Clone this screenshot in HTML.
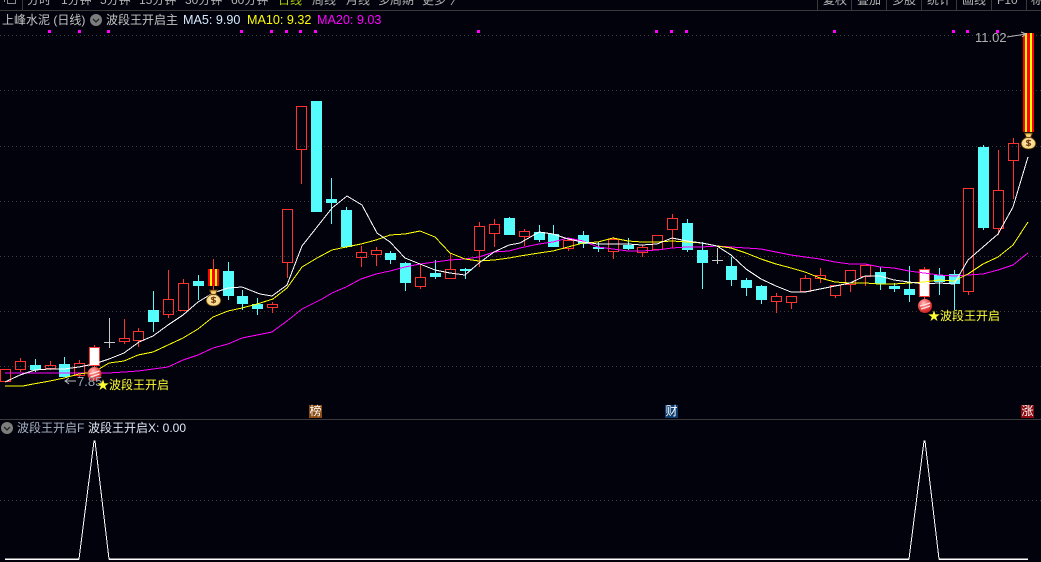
<!DOCTYPE html>
<html><head><meta charset="utf-8"><style>
html,body{margin:0;padding:0;background:#02020d;width:1041px;height:562px;overflow:hidden}
#r{position:relative;width:1041px;height:562px;overflow:hidden;background:#02020d;font-family:"Liberation Sans","Noto Sans CJK SC",sans-serif;font-size:12px;line-height:14px;color:#c8c8c8}
#r span,#r b{position:absolute;white-space:nowrap;font-weight:normal}
.t{top:-7px;color:#b4b4b4;font-size:12px}
svg{position:absolute;left:0;top:0}
.tag{width:13px;height:13px;text-align:center;color:#fff;font-size:12px;line-height:13px;top:405px}
.ma{top:13px;font-size:12.6px}
</style></head><body><div id="r">
<svg width="1041" height="562" viewBox="0 0 1041 562">
<g fill="none" shape-rendering="crispEdges">
<path stroke="#3a3a3a" d="M0 10.5H1041M0 419.5H1041M22.5 0V10M817.5 0V10M851.5 0V10M886.5 0V10M921.5 0V10M956.5 0V10M991.5 0V10M1026.5 0V10"/>
<path stroke="#3c3c3c" stroke-dasharray="1 3" d="M0 35.5H1041M0 90.5H1041M0 146.5H1041M0 201.5H1041M0 256.5H1041M0 311.5H1041M0 366.5H1041M0 500.5H1041"/>
<path stroke="#8a8a8a" d="M7.500 0V3.500H15.500V0M4.500 0V2"/>
<path fill="#ff00ff" stroke="none" d="M48 30h3v3h-3zM78 30h3v3h-3zM107 30h3v3h-3zM240 30h3v3h-3zM270 30h3v3h-3zM285 30h3v3h-3zM299 30h3v3h-3zM314 30h3v3h-3zM477 30h3v3h-3zM655 30h3v3h-3zM670 30h3v3h-3zM685 30h3v3h-3zM833 30h3v3h-3zM952 30h3v3h-3zM966 30h3v3h-3zM996 30h3v3h-3z"/>
<!-- cyan candles -->
<path fill="#54fcfc" stroke="none" d="M30 365h11v5h-11zM35 359h1v13h-1zM59 364h11v13h-11zM64 357h1v20h-1zM148 310h11v12h-11zM153 291h1v41h-1zM193 281h11v5h-11zM198 275h1v25h-1zM223 271h11v25h-11zM228 262h1v38h-1zM237 296h11v8h-11zM242 290h1v20h-1zM252 304h11v5h-11zM257 298h1v17h-1zM311 101h11v111h-11zM326 199h11v4h-11zM331 178h1v46h-1zM341 210h11v37h-11zM346 207h1v41h-1zM385 253h11v7h-11zM390 251h1v13h-1zM400 263h11v20h-11zM405 262h1v29h-1zM430 273h11v4h-11zM435 260h1v19h-1zM460 269h11v2h-11zM465 268h1v11h-1zM504 218h11v17h-11zM509 217h1v18h-1zM534 232h11v8h-11zM539 225h1v17h-1zM548 234h11v13h-11zM553 225h1v22h-1zM578 235h11v9h-11zM583 231h1v17h-1zM593 247h11v2h-11zM598 242h1v10h-1zM623 245h11v4h-11zM628 238h1v12h-1zM682 223h11v27h-11zM687 219h1v33h-1zM697 250h11v13h-11zM702 242h1v47h-1zM726 266h11v14h-11zM731 257h1v29h-1zM741 280h11v8h-11zM746 278h1v18h-1zM756 286h11v14h-11zM761 285h1v19h-1zM875 272h11v12h-11zM880 267h1v23h-1zM889 286h11v3h-11zM894 283h1v9h-1zM904 289h11v6h-11zM909 266h1v36h-1zM934 275h11v7h-11zM939 268h1v27h-1zM949 274h11v10h-11zM954 270h1v40h-1zM978 147h11v81h-11zM983 145h1v85h-1z"/>
<!-- white bodies -->
<path fill="#fff" stroke="none" d="M90 348h9v17h-9zM920 270h9v26h-9z"/>
<!-- red candles -->
<path stroke="#ff3232" d="M.5 369.5h10v12h-10zM15.5 361.5h10v8h-10zM20.5 358V361M20.5 370V372M45.5 365.5h10v3h-10zM50.5 361V365M50.5 369V370M74.5 363.5h10v12h-10zM79.5 360V363M79.5 376V378M89.5 347.5h10v18h-10zM94.5 345V347M94.5 366V368M119.5 338.5h10v3h-10zM124.5 319V338M124.5 342V344M133.5 331.5h10v9h-10zM138.5 328V331M138.5 341V347M163.5 299.5h10v15h-10zM168.5 270V299M168.5 315V318M178.5 283.5h10v27h-10zM183.5 279V283M267.5 304.5h10v3h-10zM272.5 302V304M272.5 308V313M282.5 209.5h10v53h-10zM287.5 263V278M296.5 106.5h10v43h-10zM301.5 150V184M356.5 252.5h10v5h-10zM361.5 246V252M361.5 258V267M371.5 250.5h10v4h-10zM376.5 247V250M376.5 255V266M415.5 277.5h10v9h-10zM420.5 265V277M420.5 287V289M445.5 269.5h10v9h-10zM450.5 253V269M474.5 226.5h10v24h-10zM479.5 222V226M479.5 251V267M489.5 224.5h10v9h-10zM494.5 219V224M494.5 234V247M519.5 231.5h10v5h-10zM524.5 229V231M524.5 237V246M563.5 240.5h10v8h-10zM568.5 238V240M568.5 249V251M608.5 239.5h10v12h-10zM613.5 237V239M613.5 252V259M637.5 247.5h10v5h-10zM642.5 245V247M642.5 253V257M652.5 235.5h10v14h-10zM667.5 218.5h10v11h-10zM672.5 214V218M672.5 230V248M771.5 296.5h10v5h-10zM776.5 293V296M776.5 302V313M786.5 296.5h10v6h-10zM791.5 303V309M800.5 278.5h10v13h-10zM805.5 275V278M815.5 275.5h10v3h-10zM820.5 268V275M820.5 279V283M830.5 285.5h10v10h-10zM835.5 296V298M845.5 270.5h10v14h-10zM850.5 285V292M860.5 265.5h10v11h-10zM865.5 277V286M919.5 269.5h10v27h-10zM924.5 267V269M924.5 297V299M963.5 188.5h10v103h-10zM968.5 292V295M993.5 190.5h10v38h-10zM998.5 150V190M998.5 229V235M1008.5 143.5h10v17h-10zM1013.5 138V143M1013.5 161V199"/>
<path stroke="#c8c8c8" d="M104 342.5h11M109.5 318V348M712 260.5h11M717.5 248V264"/>
<!-- special bars -->
<path stroke="#ff3232" d="M213.5 259V269M213.5 286V292"/>
<path fill="#ff0000" stroke="none" d="M208 269h11v17h-11zM1023 33h11v99h-11z"/>
<path fill="#ffff00" stroke="none" d="M210 269h2v17h-2zM215 269h2v17h-2zM1025 33h2v99h-2zM1030 33h2v99h-2z"/>
<!-- lines -->
<polyline stroke="#ff00ff" points="5,373 94,373 109,373 124,372 138,371 153,369 168,367 183,360 198,355 213,348 228,344 242,338 257,335 272,332 287,321 302,309 322,299 332,293 346,287 361,279 376,274 390,271 405,267 420,264 435,262 450,260 465,259 479,257 494,252 509,251 520,248 539,244 553,242 568,238 583,241 598,247 613,249 628,251 642,251 657,250 672,248 687,247 702,247 717,246 731,247 746,248 761,249 776,252 791,255 805,257 820,259 835,262 850,264 865,264 880,267 894,268 909,271 924,273 939,275 954,276 968,275 983,274 998,270 1013,265 1028,253"/>
<polyline stroke="#ffff00" points="5,386 23,386 33,384 50,381 64,378 79,374 94,372 109,363 124,361 138,355 153,352 168,345 183,338 198,329 213,317 228,311 242,308 257,304 273,299 287,288 302,267 317,258 332,250 346,247 361,244 376,240 390,235 405,234 420,231 435,237 450,253 465,259 479,261 494,260 509,258 520,256 539,253 553,251 568,247 583,243 598,242 613,238 628,241 642,242 657,242 672,241 687,242 702,243 717,246 731,248 746,253 761,259 776,264 791,268 805,272 820,278 835,282 850,283 865,283 880,284 894,284 909,283 924,282 939,280 954,281 968,274 983,264 998,257 1013,245 1028,222"/>
<polyline stroke="#ffffff" points="5,382 20,375 35,370 50,369 64,369 79,367 94,364 109,359 124,353 139,342 153,336 168,325 183,315 198,302 213,293 228,288 242,287 260,294 272,296 287,285 302,246 317,227 332,208 347,196 362,205 377,233 390,242 405,258 420,264 435,270 450,273 465,275 479,263 494,252 509,245 520,243 539,232 553,234 568,239 583,242 598,244 613,244 628,244 642,245 657,244 672,238 687,241 702,243 717,246 731,255 746,269 761,279 776,286 791,292 805,292 820,289 835,286 850,283 865,276 880,276 894,280 909,282 924,284 939,283 954,284 968,260 983,247 998,234 1013,207 1028,157"/>
<polyline stroke="#ffffff" stroke-width="1" points="5,559 79,559 94,441 95,441 109,559 909,559 924,441 925,441 939,559 1028,559"/>
<path stroke="#ffffff" d="M5 559.5H79M109 559.5H909M939 559.5H1028"/>
</g>
<!-- arrows -->
<g fill="none" stroke="#b8b8b8">
<path d="M1007 37L1026 34M1021 32L1026 34L1022 37"/>
<path d="M65 381H76M69 378L65 381L69 384"/>
</g>
<!-- circle icons -->
<g>
<circle cx="96" cy="20" r="6" fill="#7d7d7d"/><path d="M93 19l3 3 3-3" fill="none" stroke="#222" stroke-width="1.3"/>
<circle cx="7" cy="428" r="6" fill="#7d7d7d"/><path d="M4 427l3 3 3-3" fill="none" stroke="#222" stroke-width="1.3"/>
</g>
<!-- balls -->
<defs>
<radialGradient id="bl" cx=".4" cy=".3" r=".75"><stop offset="0" stop-color="#ffc0c0"/><stop offset=".55" stop-color="#f04848"/><stop offset="1" stop-color="#c01c1c"/></radialGradient>
<radialGradient id="bg" cx=".5" cy=".6" r=".65"><stop offset="0" stop-color="#fff6d0"/><stop offset=".75" stop-color="#f4d070"/><stop offset="1" stop-color="#a87010"/></radialGradient>
<g id="ball"><circle r="7" fill="url(#bl)"/><path d="M-5 0Q0 -1 5 -3M-4 3Q0 2 5 0" fill="none" stroke="#ffe4e4" stroke-width="1.300"/></g>
<g id="bag"><path d="M-4 -8L4 -8L2 -3.500C6 -2 8 1 7 4C6 7 3 8 0 8C-3 8 -6 7 -7 4C-8 1 -6 -2 -2 -3.500Z" fill="url(#bg)" stroke="#5e3a08" stroke-width=".8"/><path d="M-3 -3.500H3" stroke="#7a4a08" stroke-width="1.200"/><path d="M2.500 0Q0 -1.200 -2 0Q-2.300 1.500 0 2Q2.500 2.500 2 3.800Q0 5 -2.500 3.800M0 -1.500V5.500" fill="none" stroke="#7a3c08" stroke-width="1.200"/></g>
</defs>
<use href="#ball" x="94.500" y="374"/>
<use href="#ball" x="925" y="306"/>
<use href="#bag" x="213.500" y="298"/>
<use href="#bag" x="1028.500" y="141"/>
</svg>

<span class="t" style="left:27px">分时</span>
<span class="t" style="left:61px">1分钟</span>
<span class="t" style="left:100px">5分钟</span>
<span class="t" style="left:139px">15分钟</span>
<span class="t" style="left:185px">30分钟</span>
<span class="t" style="left:231px">60分钟</span>
<span class="t" style="left:278px;color:#b4d000">日线</span>
<span class="t" style="left:312px">周线</span>
<span class="t" style="left:346px">月线</span>
<span class="t" style="left:378px">多周期</span>
<span class="t" style="left:422px">更多</span>
<span class="t" style="left:450px">〉</span>
<span class="t" style="left:823px">复权</span>
<span class="t" style="left:857px">叠加</span>
<span class="t" style="left:892px">多股</span>
<span class="t" style="left:927px">统计</span>
<span class="t" style="left:962px">画线</span>
<span class="t" style="left:997px">F10</span>
<span class="t" style="left:1031px">标</span>

<span style="left:2px;top:13px;color:#c4c4c4">上峰水泥 (日线)</span>
<span style="left:106px;top:13px;color:#c4c4c4">波段王开启主</span>
<span class="ma" style="left:183px;color:#d6ecff">MA5: 9.90</span>
<span class="ma" style="left:247px;color:#ffff00">MA10: 9.32</span>
<span class="ma" style="left:317px;color:#ff00ff">MA20: 9.03</span>

<span style="left:975px;top:31px;color:#b0b0b0;font-size:13px">11.02</span>
<span style="left:77px;top:375px;color:#9aa8b8;font-size:13px">7.85</span>
<span style="left:97px;top:378px;color:#ffff33">★波段王开启</span>
<span style="left:928px;top:309px;color:#ffff33">★波段王开启</span>

<b class="tag" style="left:309px;background:#8a4a10">榜</b>
<b class="tag" style="left:665px;background:#0c3c70">财</b>
<b class="tag" style="left:1021px;background:#8c0a10">涨</b>

<span style="left:17px;top:421px;color:#a8b4c4">波段王开启F</span>
<span style="left:88px;top:421px;color:#dfe8f4">波段王开启X: 0.00</span>
</div></body></html>
